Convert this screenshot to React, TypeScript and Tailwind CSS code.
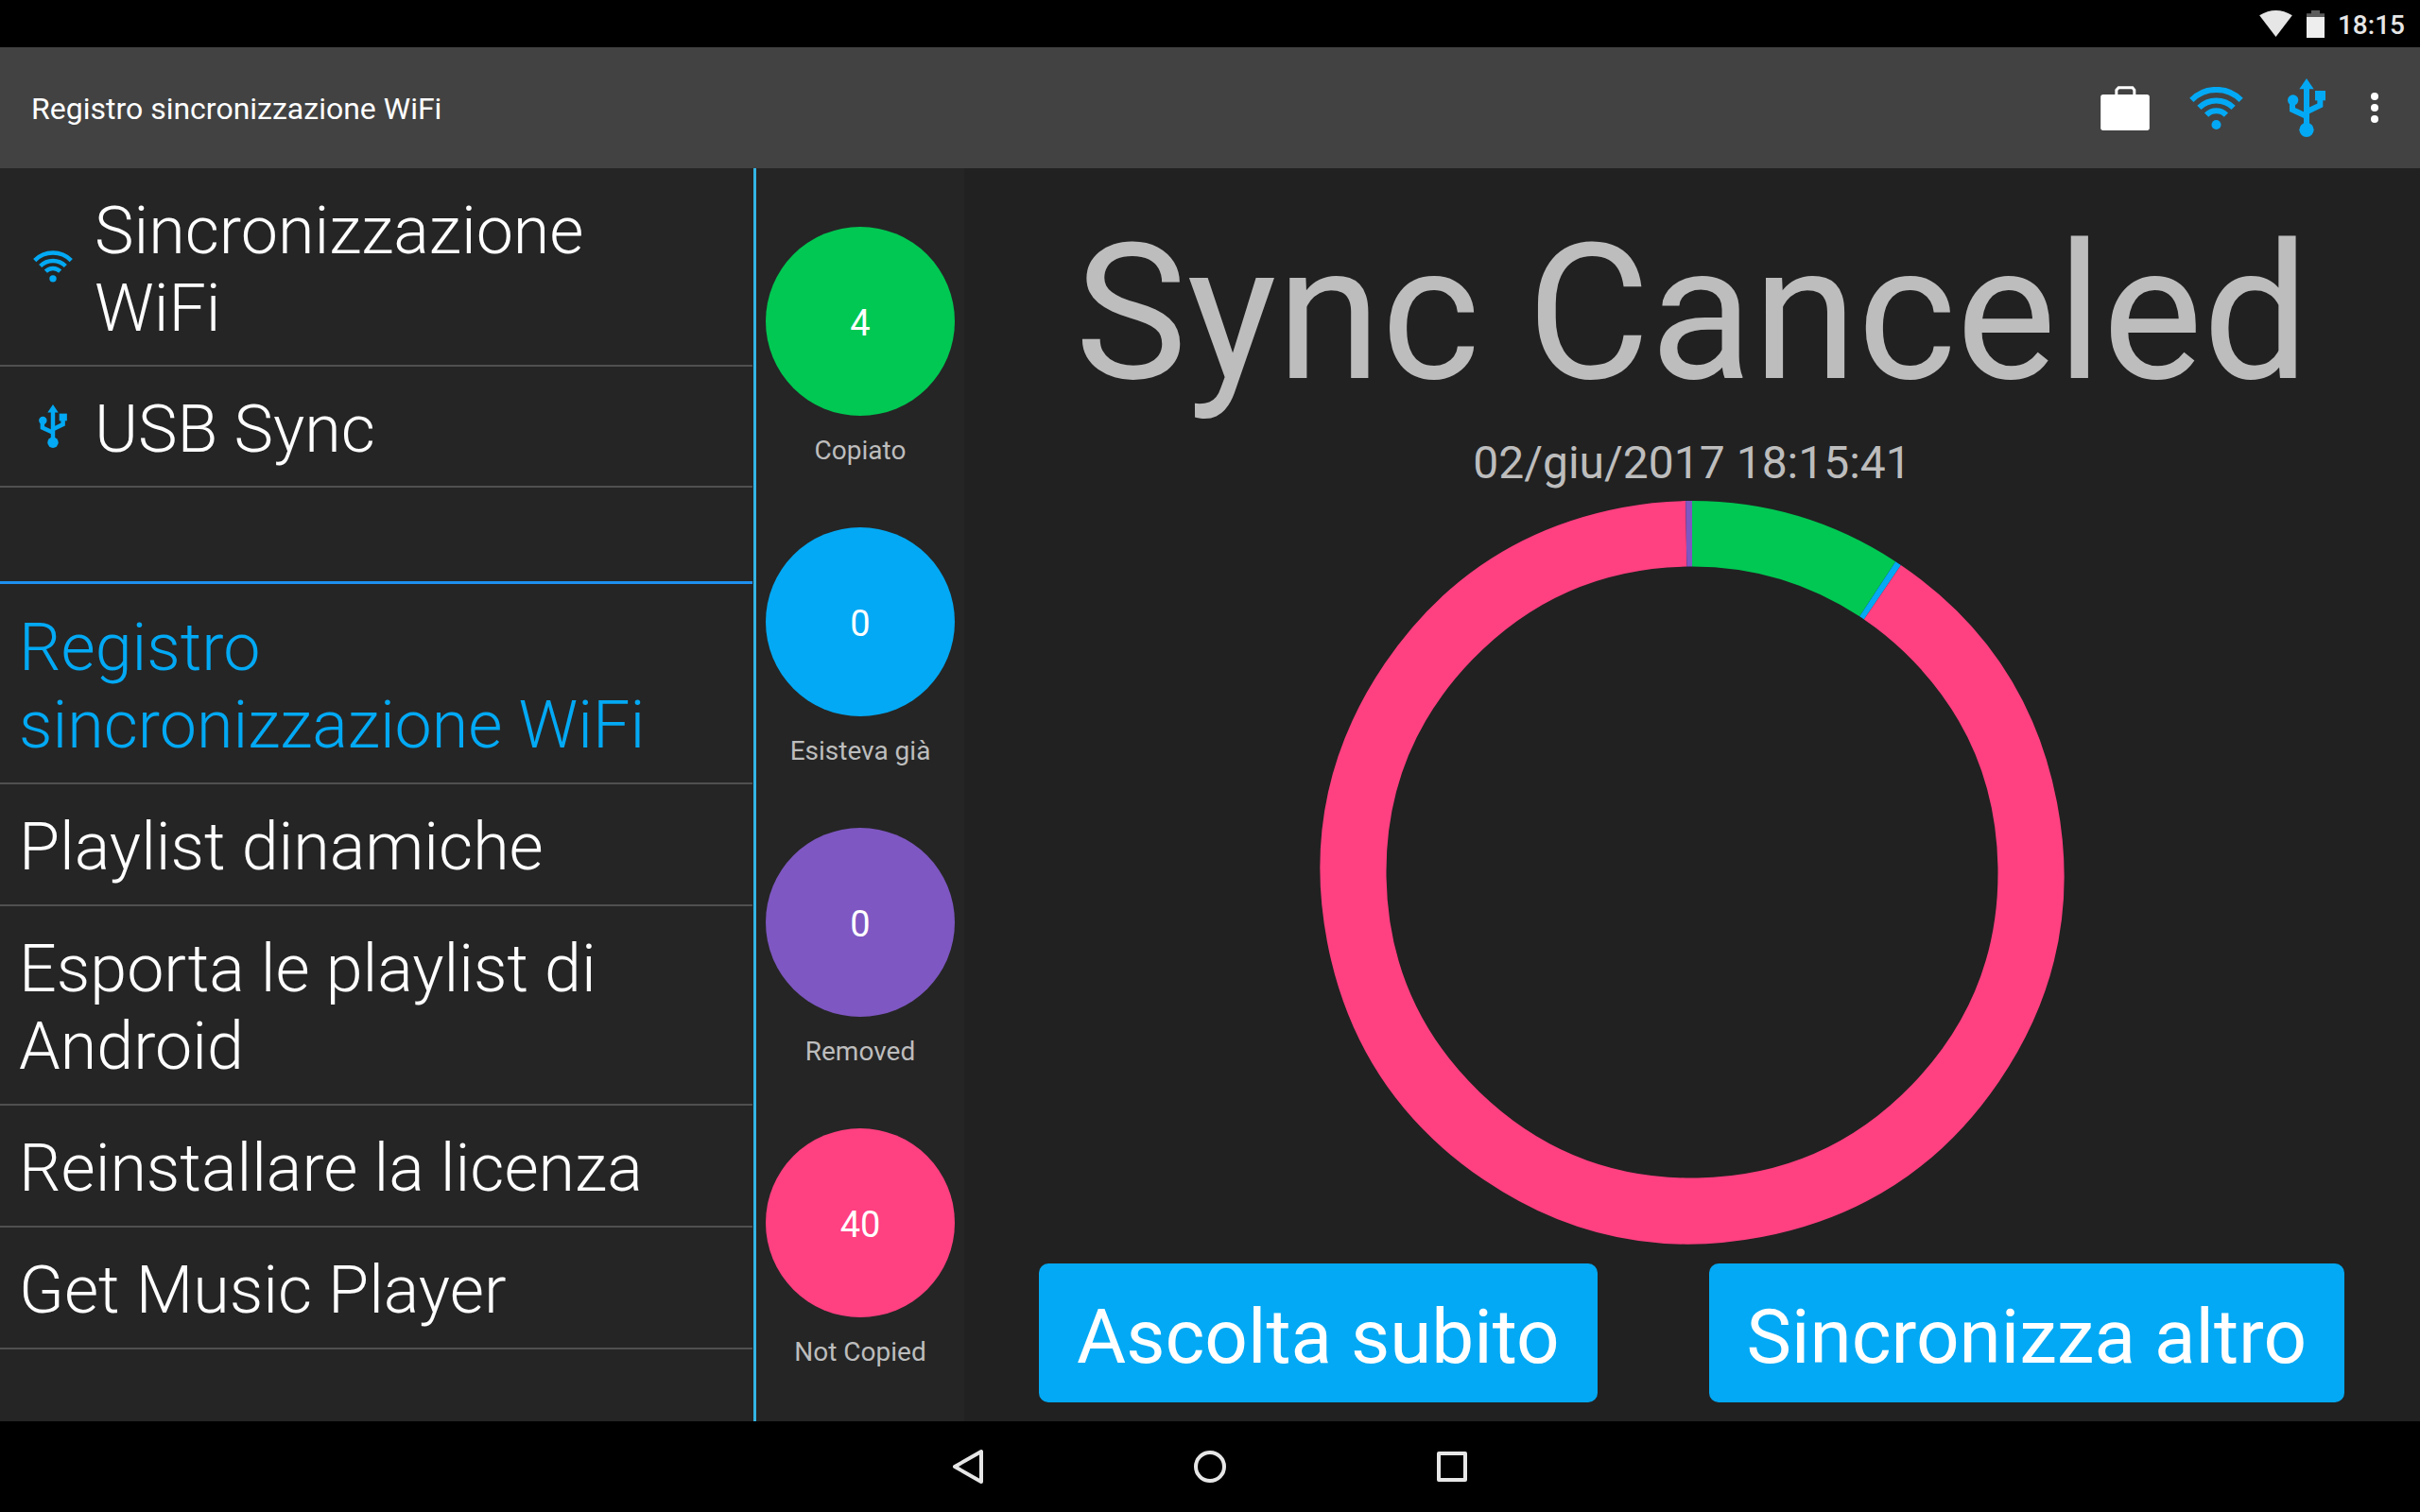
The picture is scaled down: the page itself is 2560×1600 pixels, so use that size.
import clsx from "clsx";
import type { ReactNode } from "react";

type IconProps = {
  className?: string;
};

type MenuItem = {
  label: string;
  icon?: ReactNode;
  active?: boolean;
};

type Stat = {
  label: string;
  value: number;
  color: string;
};

type Slice = {
  color: string;
  from: number;
  to: number;
};

function WifiIcon({ className }: IconProps) {
  return (
    <svg viewBox="0 0 170 134" className={className} aria-hidden="true">
      <g fill="none" stroke="currentColor" strokeWidth="18">
        <path d="M7 41A110 110 0 0 1 163 41" />
        <path d="M31 65A77 77 0 0 1 139 65" />
        <path d="M54 88A44 44 0 0 1 116 88" />
      </g>
      <circle cx="85" cy="119" r="15" fill="currentColor" />
    </svg>
  );
}

function UsbIcon({ className }: IconProps) {
  return (
    <svg viewBox="0 0 120 186" className={className} aria-hidden="true">
      <path d="M60 0L83 34H37Z" fill="currentColor" />
      <rect x="51" y="32" width="18" height="120" fill="currentColor" />
      <circle cx="60" cy="163" r="23" fill="currentColor" />
      <circle cx="17" cy="69" r="17" fill="currentColor" />
      <rect x="87" y="39" width="33" height="31" fill="currentColor" />
      <path
        d="M15 72V99L58 119M103 66V85L62 105"
        fill="none"
        stroke="currentColor"
        strokeWidth="18"
      />
    </svg>
  );
}

function BriefcaseIcon({ className }: IconProps) {
  return (
    <svg viewBox="0 0 155 141" className={className} aria-hidden="true">
      <rect y="27" width="155" height="114" rx="8" fill="currentColor" />
      <path
        d="M50 30V13L57 5H101L107 13V30"
        fill="none"
        stroke="currentColor"
        strokeWidth="9"
      />
    </svg>
  );
}

function MoreIcon({ className }: IconProps) {
  return (
    <svg viewBox="0 0 8 32" className={className} aria-hidden="true">
      <circle cx="4" cy="4" r="4" fill="currentColor" />
      <circle cx="4" cy="16" r="4" fill="currentColor" />
      <circle cx="4" cy="28" r="4" fill="currentColor" />
    </svg>
  );
}

const syncItems: MenuItem[] = [
  {
    label: "Sincronizzazione WiFi",
    icon: <WifiIcon className="h-[34px] w-[42px]" />,
  },
  { label: "USB Sync", icon: <UsbIcon className="h-[46px] w-[30px]" /> },
];

const menuItems: MenuItem[] = [
  { label: "Registro sincronizzazione WiFi", active: true },
  { label: "Playlist dinamiche" },
  { label: "Esporta le playlist di Android" },
  { label: "Reinstallare la licenza" },
  { label: "Get Music Player" },
];

const stats: Stat[] = [
  { label: "Copiato", value: 4, color: "bg-[#00c853]" },
  { label: "Esisteva già", value: 0, color: "bg-[#03a9f4]" },
  { label: "Removed", value: 0, color: "bg-[#7e57c2]" },
  { label: "Not Copied", value: 40, color: "bg-[#ff4081]" },
];

// angles in degrees, clockwise from the top
const slices: Slice[] = [
  { color: "#00c853", from: 0, to: 33.2 },
  { color: "#03a9f4", from: 33.2, to: 34.2 },
  { color: "#ff4081", from: 34.2, to: 359 },
  { color: "#7e57c2", from: 359, to: 360 },
];

const OUTER = 393;
const INNER = 323.5;

function point(radius: number, angle: number) {
  const rad = (angle * Math.PI) / 180;
  return `${radius * Math.sin(rad)} ${-radius * Math.cos(rad)}`;
}

// quadratic curves of at most 45 degrees each
function curve(radius: number, from: number, to: number) {
  const dir = Math.sign(to - from);
  const parts: string[] = [];
  let angle = from;
  while (Math.abs(to - angle) > 0.001) {
    const step = Math.min(45, Math.abs(to - angle));
    const half = (step / 2) * (Math.PI / 180);
    const next = angle + dir * step;
    const control = point(radius / Math.cos(half), angle + (dir * step) / 2);
    parts.push(`Q${control} ${point(radius, next)}`);
    angle = next;
  }
  return parts.join("");
}

function slicePath({ from, to }: Slice) {
  return [
    `M${point(OUTER, from)}`,
    curve(OUTER, from, to),
    `L${point(INNER, to)}`,
    curve(INNER, to, from),
    "Z",
  ].join("");
}

function StatusBar() {
  return (
    <div className="flex h-[50px] items-center justify-end bg-black pr-4 text-[#e6e6e6]">
      <svg viewBox="0 0 104 84" className="mr-[15px] h-7 w-[35px]" aria-hidden="true">
        <path d="M0 16Q52 -16 104 16L52 84Z" fill="currentColor" />
      </svg>
      <svg viewBox="0 0 57 87" className="mr-[14px] h-[29px] w-[19px]" aria-hidden="true">
        <path d="M15 0H42V10H57V22H0V10H15Z" fill="#5c5c5c" />
        <rect y="21" width="57" height="66" fill="#eeeeee" />
      </svg>
      <span className="pt-1 text-[28px] leading-8 font-medium">18:15</span>
    </div>
  );
}

function Header() {
  return (
    <header className="flex h-32 items-center bg-[#424242] pr-11 pl-[33px] text-white">
      <h1 className="flex-1 pt-0.5 text-[32px] leading-10">Registro sincronizzazione WiFi</h1>
      <button type="button" aria-label="Negozio" className="mr-[42px]">
        <BriefcaseIcon className="h-[47px] w-[52px]" />
      </button>
      <button type="button" aria-label="WiFi" className="mr-[47px] text-[#03a9f4]">
        <WifiIcon className="h-[45px] w-[57px]" />
      </button>
      <button type="button" aria-label="USB" className="mr-12 text-[#03a9f4]">
        <UsbIcon className="h-[62px] w-10" />
      </button>
      <button type="button" aria-label="Altro">
        <MoreIcon className="h-8 w-2" />
      </button>
    </header>
  );
}

function MenuRow({ label, icon, active }: MenuItem) {
  return (
    <li className="border-b-2 border-[#505050]">
      <a
        href="#"
        className={clsx(
          "flex items-center pr-10 pl-5 text-[70px] leading-[82px] font-light",
          icon ? "py-[19px]" : "py-5",
          active ? "text-[#03a9f4]" : "text-white",
        )}
      >
        {icon && (
          <span className="mr-2 flex w-[72px] shrink-0 justify-center text-[#03a9f4]">
            {icon}
          </span>
        )}
        <span className={icon ? "pt-1.5" : "pt-[5px]"}>{label}</span>
      </a>
    </li>
  );
}

function Sidebar() {
  return (
    <nav className="w-[31.25%] shrink-0 border-r-3 border-[#33b5e5] bg-[#252525] pr-px">
      <ul>
        {syncItems.map((item) => (
          <MenuRow key={item.label} {...item} />
        ))}
      </ul>
      <ul className="mt-[99px] border-t-3 border-[#1e90f0] pt-px">
        {menuItems.map((item) => (
          <MenuRow key={item.label} {...item} />
        ))}
      </ul>
    </nav>
  );
}

function StatColumn() {
  return (
    <section className="flex w-[220px] shrink-0 flex-col items-center justify-evenly bg-[#252525]">
      {stats.map((stat) => (
        <div key={stat.label} className="flex h-[264px] flex-col items-center pt-2">
          <div
            className={clsx(
              "flex size-[200px] items-center justify-center rounded-full pt-1 text-[38px] leading-[44px] text-white",
              stat.color,
            )}
          >
            {stat.value}
          </div>
          <div className="mt-5 text-[28px] leading-[34px] text-[#bdbdbd]">{stat.label}</div>
        </div>
      ))}
    </section>
  );
}

function SyncResult() {
  return (
    <main className="flex flex-1 flex-col items-center bg-[#212121] pt-9 pb-5 text-[#bdbdbd]">
      <h2 className="text-[200px] leading-[236px] whitespace-nowrap">Sync Canceled</h2>
      <p className="mt-3 text-[48px] leading-[56px]">02/giu/2017 18:15:41</p>
      <svg
        viewBox="-394 -394 788 788"
        className="mt-[11px] w-[788px]"
        role="img"
        aria-label="Risultato della sincronizzazione"
      >
        {slices.map((slice) => (
          <path key={slice.from} d={slicePath(slice)} fill={slice.color} />
        ))}
      </svg>
      <div className="mt-auto flex w-full justify-between pr-20 pl-[79px] text-[80px] leading-[94px] text-white">
        <button type="button" className="rounded-[10px] bg-[#03a9f4] px-10 pt-[31px] pb-[22px]">
          Ascolta subito
        </button>
        <button type="button" className="rounded-[10px] bg-[#03a9f4] px-10 pt-[31px] pb-[22px]">
          Sincronizza altro
        </button>
      </div>
    </main>
  );
}

function NavBar() {
  return (
    <footer className="flex h-24 items-center justify-center gap-[216px] bg-black text-[#e6e6e6]">
      <button type="button" aria-label="Indietro">
        <svg viewBox="0 0 40 40" className="size-10" aria-hidden="true">
          <path
            d="M34 4V36L6 20Z"
            fill="none"
            stroke="currentColor"
            strokeWidth="4"
            strokeLinejoin="round"
          />
        </svg>
      </button>
      <button type="button" aria-label="Home">
        <svg viewBox="0 0 40 40" className="size-10" aria-hidden="true">
          <circle cx="20" cy="20" r="15" fill="none" stroke="currentColor" strokeWidth="4" />
        </svg>
      </button>
      <button type="button" aria-label="Recenti">
        <svg viewBox="0 0 40 40" className="size-10" aria-hidden="true">
          <rect
            x="6"
            y="6"
            width="28"
            height="28"
            fill="none"
            stroke="currentColor"
            strokeWidth="4"
            strokeLinejoin="round"
          />
        </svg>
      </button>
    </footer>
  );
}

export default function App() {
  return (
    <div className="flex min-h-screen flex-col bg-black font-[Roboto,sans-serif]">
      <StatusBar />
      <Header />
      <div className="flex flex-1">
        <Sidebar />
        <StatColumn />
        <SyncResult />
      </div>
      <NavBar />
    </div>
  );
}
